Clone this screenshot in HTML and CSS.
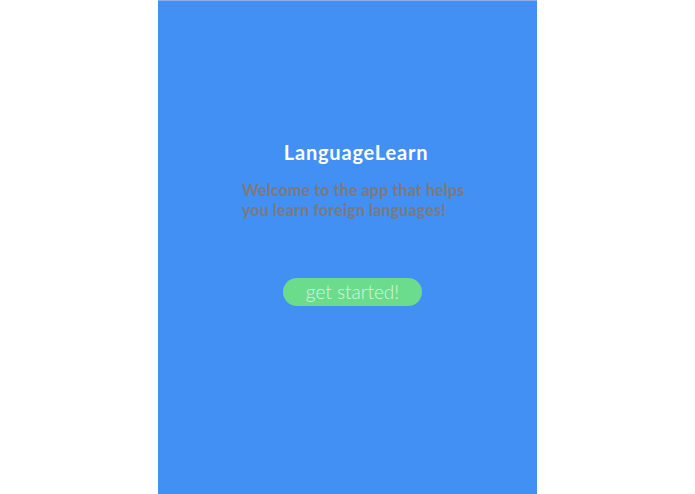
FILE: index.html
```html
<!DOCTYPE html>
<html>
<head>
<meta charset="utf-8">
<title>LanguageLearn</title>
<link rel="stylesheet" href="styles.css">
</head>
<body>
<main class="screen">
  <section class="intro">
    <h1 class="title">LanguageLearn</h1>
    <p class="tagline">Welcome to the app that helps you learn foreign languages!</p>
    <button class="start">get started!</button>
  </section>
</main>
</body>
</html>
```

FILE: styles.css
```css
html, body {
  margin: 0;
  padding: 0;
  background: #ffffff;
  height: 100%;
}

body {
  font-family: Lato, "Open Sans", sans-serif;
  display: flex;
  justify-content: flex-start;
}

.screen {
  margin-left: 158px;
  width: 379px;
  height: 494px;
  box-sizing: border-box;
  background: #4390f5;
  border-top: 1px solid #8eaee6;
}

.intro {
  display: flex;
  flex-direction: column;
  align-items: center;
  padding-top: 138px;
}

.title {
  margin: 0;
  color: #ffffff;
  font-size: 20px;
  font-weight: 700;
  line-height: 26px;
  letter-spacing: 0.8px;
  padding-left: 17px;
}

.tagline {
  align-self: flex-start;
  margin: 15px 0 0 84px;
  width: 240px;
  color: #777b84;
  font-size: 16px;
  font-weight: 900;
  line-height: 20px;
  letter-spacing: 0.12px;
}

.start {
  margin-top: 58px;
  margin-left: 10px;
  width: 139px;
  height: 28px;
  border: none;
  border-radius: 14px;
  background: #6adc8c;
  color: #d9f6df;
  font-family: Lato, "Open Sans", sans-serif;
  font-size: 19px;
  font-weight: 300;
  line-height: 28px;
  padding: 0;
}
```
